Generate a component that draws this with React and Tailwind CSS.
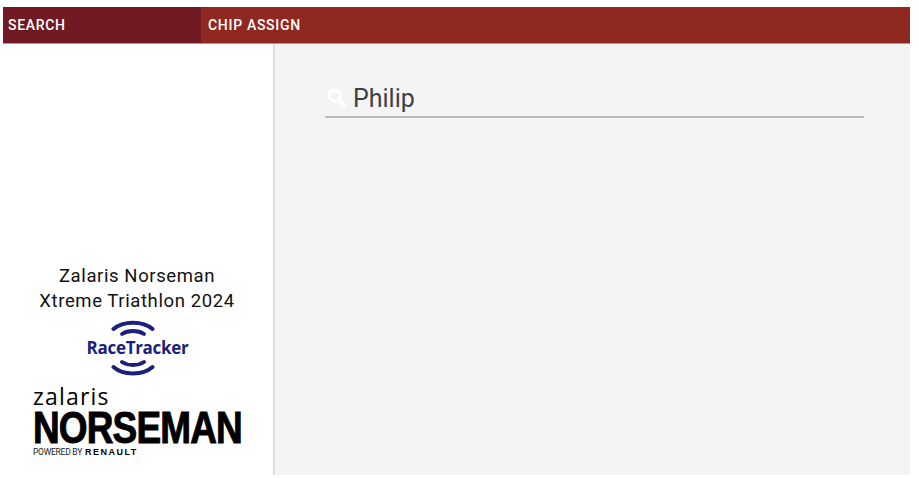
import React from 'react';

// Signal arcs above and below the RaceTracker wordmark
const Arcs = ({ flip }) => (
  <svg width="44" height="16" viewBox="0 0 44 16" fill="none" stroke="#1b1f7e" strokeLinecap="round" className={`mr-[10px] ${flip ? 'rotate-180' : ''}`}>
    <path d="M2.5 9 C 12 0.5, 32 0.5, 41.5 9" strokeWidth="4" />
    <path d="M11 14 C 17 10, 27 10, 33 14" strokeWidth="3.8" />
  </svg>
);

const App = () => {
  return (
    <div className="w-[919px] h-[478px] bg-white pl-[3px] pr-[9px] pt-[7px] pb-[3px] flex flex-col font-['Roboto',sans-serif]">
      <header className="flex h-[37px] shrink-0 bg-[#8f2820] border-b border-b-[#c08f8b] text-white text-[14px] font-medium tracking-[0.7px]">
        <div className="w-[198px] flex items-center pl-[5px] bg-[#721a24]">SEARCH</div>
        <div className="flex items-center pl-[7px]">CHIP ASSIGN</div>
      </header>

      <div className="flex flex-1 min-h-0">
        <aside className="w-[272px] shrink-0 border-r-2 border-r-[#dcdcdc] flex flex-col items-center justify-end pb-[18px]">
          <div className="mr-[2px] text-[18.5px] leading-[25px] tracking-[0.6px] text-[#111] text-center">
            <div>Zalaris Norseman</div>
            <div>Xtreme Triathlon 2024</div>
          </div>

          <div className="mt-[6px] flex flex-col items-center w-[110px]">
            <Arcs />
            <div className="mr-[1px] text-[#1b1f7e] text-[17px] leading-[22px] font-bold tracking-[-0.3px] font-['Open_Sans',sans-serif] my-[1px]">RaceTracker</div>
            <Arcs flip />
          </div>

          <div className="mt-[12px] w-[208px] ml-[-2px] flex flex-col text-black">
            <div className="text-[23px] leading-[16px] tracking-[1.2px] font-['Open_Sans',sans-serif]">zalaris</div>
            <div className="mt-[7px] text-[44px] leading-[34px] font-black tracking-[-1px] font-['Liberation_Sans',sans-serif] origin-left scale-x-[0.84] whitespace-nowrap [-webkit-text-stroke:1px_black]">NORSEMAN</div>
            <div className="flex items-baseline gap-[3px] mt-[2px] leading-[10px]">
              <span className="text-[8.5px] tracking-[-0.25px] text-[#222]">POWERED BY</span>
              <span className="text-[9px] font-bold tracking-[1.5px] font-['Liberation_Sans',sans-serif]">RENAULT</span>
            </div>
          </div>
        </aside>

        <main className="flex-1 bg-[#f4f4f4] pl-[50px] pr-[46px] pt-[34px]">
          <div className="h-[40px] flex items-center gap-[6px] border-b-2 border-b-[#b9b9b9]">
            <svg width="21" height="21" viewBox="0 0 21 21" fill="none" stroke="#ffffff" strokeLinecap="round" className="ml-[1px] shrink-0">
              <circle cx="8.5" cy="8.5" r="5.5" strokeWidth="3" />
              <path d="M13 13 L18.5 18.5" strokeWidth="3.4" />
            </svg>
            <span className="mt-[4px] text-[25px] text-[#3f3f46]">Philip</span>
          </div>
        </main>
      </div>
    </div>
  );
};

export default App;
